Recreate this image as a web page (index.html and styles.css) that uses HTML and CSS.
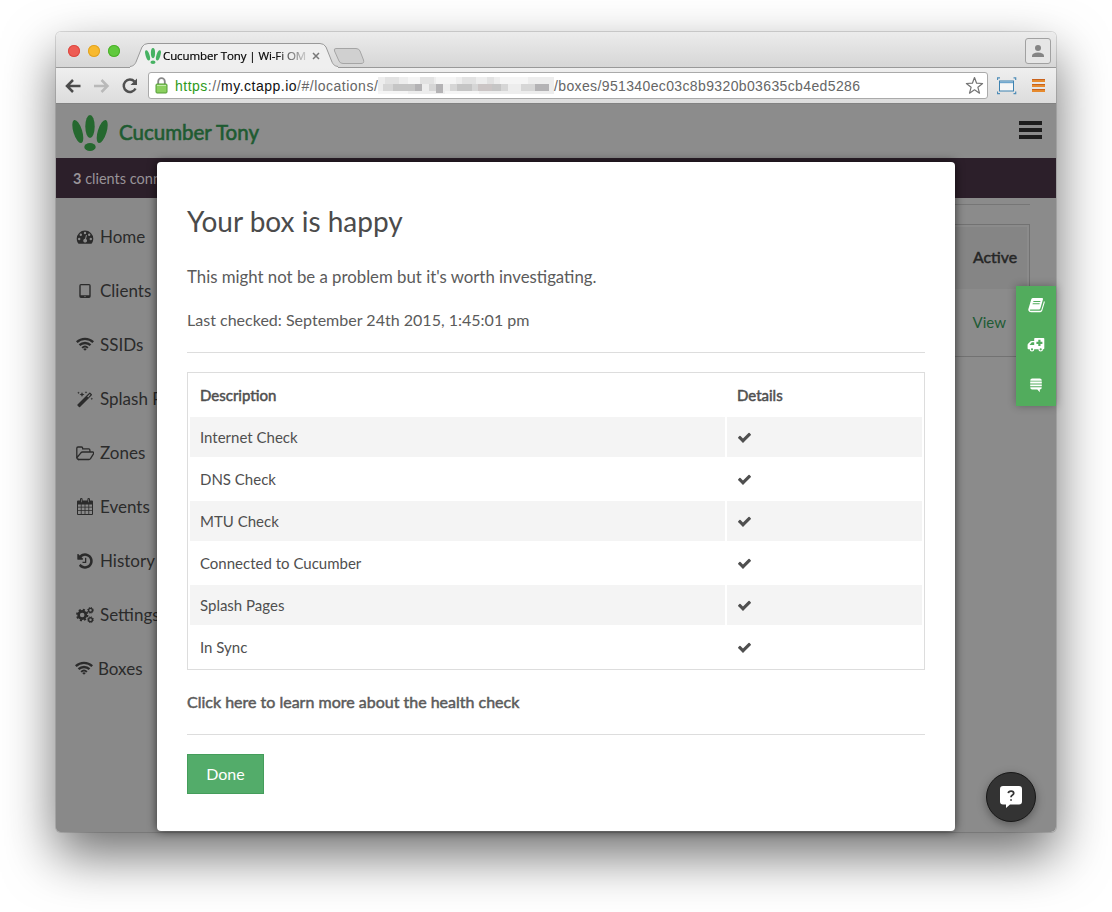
FILE: index.html
```
<!DOCTYPE html>
<html lang="en">
<head>
<meta charset="utf-8">
<title>Cucumber Tony | Wi-Fi</title>
<link rel="stylesheet" href="styles.css">
</head>
<body>
<svg width="0" height="0" class="defs">
  <defs>
    <symbol id="check" viewBox="0 0 1792 1792"><path d="M1671 566q0 40-28 68l-724 724-136 136q-28 28-68 28t-68-28l-136-136-362-362q-28-28-28-68t28-68l136-136q28-28 68-28t68 28l294 295 656-657q28-28 68-28t68 28l136 136q28 28 28 68z"/></symbol>
    <symbol id="logo" viewBox="0 0 36 36">
      <ellipse cx="18" cy="11.500" rx="4.700" ry="11.500"/>
      <ellipse cx="5.800" cy="16.500" rx="4.400" ry="12" transform="rotate(-17 5.800 16.500)"/>
      <ellipse cx="30.200" cy="16.500" rx="4.400" ry="12" transform="rotate(17 30.200 16.500)"/>
      <ellipse cx="18" cy="32" rx="5.700" ry="4"/>
    </symbol>
    <symbol id="wifi" viewBox="0 0 18 14">
      <g fill="none" stroke="currentColor" stroke-width="2.300"><path d="M.8 5.200a11.800 11.800 0 0 1 16.400 0"/><path d="M3.500 8.200a8 8 0 0 1 11 0"/><path d="M6.100 10.900a4.300 4.300 0 0 1 5.800 0" stroke-width="1.900"/></g><path d="M7.200 12a2.600 2.600 0 0 1 3.600 0L9 13.800z"/>
    </symbol>
  </defs>
</svg>
<div class="window">
  <div class="tabstrip">
    <div class="lights"><i class="red"></i><i class="yellow"></i><i class="green"></i></div>
    <div class="tab">
      <svg class="tab-shape" width="240" height="26" viewBox="0 0 240 26"><path d="M0 25 C4 24 5 22 6 20 L12 5 Q14 1.500 18 1.500 H190 Q194 1.500 196 5 L202 20 C203 22 204 24 208 25 V26 H0z" fill="#efefef"/><path d="M0 24.500 C4 24 5 22 6 20 L12 5 Q14 1.500 18 1.500 H190 Q194 1.500 196 5 L202 20 C203 22 204 24 208 24.500" fill="none" stroke="#999"/><path d="M206 6.500H226Q229 6.500 230 9L233.500 18Q234.500 21.500 231 21.500H213Q210 21.500 209 19L204.500 9Q203.500 6.500 206 6.500z" fill="#d0d0d0" stroke="#a5a5a5"/></svg>
      <svg class="favicon" width="16" height="16"><use href="#logo"/></svg>
      <span class="tab-title">Cucumber Tony | Wi-Fi OM</span>
      <svg class="tab-close" width="8" height="8" viewBox="0 0 8 8"><path d="M1 1l6 6M7 1L1 7" stroke="#777" stroke-width="1.500"/></svg>
    </div>
    <div class="profile"><svg width="14" height="14" viewBox="0 0 14 14"><circle cx="7" cy="4" r="3" fill="#858585"/><path d="M1 13v-1.500Q1.500 8.800 7 8.500q5.500.3 6 3V13z" fill="#858585"/></svg></div>
  </div>
  <div class="toolbar">
    <svg class="nav" width="76" height="20" viewBox="0 0 76 20"><g fill="none" stroke-width="2.500"><path d="M18.500 10H5.500M11 4L5 10l6 6" stroke="#4b4b4b"/><path d="M32 10h13M39.500 4l6 6-6 6" stroke="#b9b9b9"/><path d="M72.500 5.500A6.200 6.200 0 1 0 73.500 12.500" stroke="#505050"/></g><path d="M75 2.500V9H68.500z" fill="#505050"/></svg>
    <div class="address">
      <svg width="13" height="17" viewBox="0 0 13 17"><path d="M3.200 8V4.500a3.300 3.300 0 0 1 6.600 0V8" fill="none" stroke="#888" stroke-width="1.800"/><rect x="1" y="7" width="11" height="9" rx="1" fill="#8bd05f" stroke="#539c36"/><path d="M2 8.500h9" stroke="#c3eaab"/></svg>
      <div class="url"><span class="secure">https</span><span>://</span><span class="host">my.ctapp.io</span><span>/#/locations/</span></div>
      <svg class="mosaic" width="176" height="17" viewBox="0 0 176 17" shape-rendering="crispEdges">
        <path fill="#ededed" d="M0 0h176v17H0z"/><path fill="#e2e2e2" d="M7 0h14v7H7zM42 0h14v7H42zM84 0h14v7H84zM109 0h7v7h-7z"/><path fill="#f5f5f5" d="M30 0h12v7H30zM58 0h20v7H58zM122 0h28v7h-28zM0 14h30v3H0zM67 14h34v3H67z"/>
        <path fill="#d6d6d6" d="M5 7h10v7H5zM51 7h7v7h-7zM72 7h58v7H72zM143 7h14v7h-14z"/><path fill="#c5c5c5" d="M15 7h22v7H15zM79 7h15v7H79zM101 7h22v7h-22z"/><path fill="#b4b3b5" d="M37 7h7v7h-7zM58 7h7v9h-7zM157 7h14v7h-14z"/><path fill="#cbc5c5" d="M100 7h14v7h-14z"/>
      </svg>
      <div class="url path">/boxes/951340ec03c8b9320b03635cb4ed5286</div>
      <svg class="star" width="19" height="19" viewBox="0 0 19 19"><path d="M9.500 1.500l2.100 5.700 6 .3-4.700 3.800 1.600 5.900-5-3.400-5 3.400 1.600-5.900L1.400 7.500l6-.3z" fill="#fff" stroke="#747474" stroke-width="1.200" stroke-linejoin="round"/></svg>
    </div>
    <svg width="20" height="18" viewBox="0 0 20 18"><rect x="2.500" y="4" width="14" height="10" fill="#f6f6f6" stroke="#3d82b0"/><path d="M3 4.500h13v1.700H3z" fill="#6fa6cd"/><path d="M.5 3V.8H3M16.500.8h2.200V3M.5 14.500v2.200H3M16.500 16.700h2.200v-2.200" fill="none" stroke="#4f8db8" stroke-width="1.200"/></svg>
    <svg class="menu" width="13" height="14" viewBox="0 0 13 14"><path d="M0 0h13v3H0zM0 5h13v3H0zM0 10h13v3H0z" fill="#e68a2e"/><path d="M0 .5h13M0 5.500h13M0 10.500h13" stroke="#c9631c"/></svg>
  </div>

  <div class="page">
    <header class="brand">
      <svg class="logo" width="36" height="36"><use href="#logo"/></svg>
      <span class="brand-name">Cucumber Tony</span>
      <div class="burger"><i></i><i></i><i></i></div>
    </header>
    <div class="status"><b>3</b>&nbsp;clients connected</div>
    <div class="body">
      <nav class="sidebar">
        <a><svg viewBox="0 0 18 18"><path fill-rule="evenodd" d="M9 2.500a8.300 8.300 0 0 0-8.300 8.300q0 2.500 1.300 4.500.3.400.8.400h12.400q.5 0 .8-.4 1.300-2 1.300-4.500A8.300 8.300 0 0 0 9 2.500zM9 3.800a1.200 1.200 0 1 1 0 2.400 1.200 1.200 0 0 1 0-2.400zM4.800 5.600a1.200 1.200 0 1 1 0 2.400 1.200 1.200 0 0 1 0-2.400zM13.200 5.600a1.200 1.200 0 1 1 0 2.400 1.200 1.200 0 0 1 0-2.400zM3.200 9.800a1.200 1.200 0 1 1 0 2.400 1.200 1.200 0 0 1 0-2.400zM14.800 9.800a1.200 1.200 0 1 1 0 2.400 1.200 1.200 0 0 1 0-2.400zM10 7l1 .3-1 3.700a1.900 1.900 0 1 1-1-.2z"/></svg>Home</a>
        <a><svg viewBox="0 0 18 18"><path fill-rule="evenodd" d="M5 2h8a1.700 1.700 0 0 1 1.700 1.700v10.600A1.700 1.700 0 0 1 13 16H5a1.700 1.700 0 0 1-1.700-1.700V3.700A1.700 1.700 0 0 1 5 2zM4.700 3.300v9.900h8.600V3.300zM9 14a.6.6 0 1 0 0 1.200A.6.600 0 0 0 9 14z"/></svg>Clients</a>
        <a><svg viewBox="0 0 18 16"><use href="#wifi" width="18" height="14"/></svg>SSIDs</a>
        <a><svg viewBox="0 0 18 18"><path fill-rule="evenodd" d="M1.500 14.500L13.300 2.700q.5-.5 1 0l1.500 1.500q.5.500 0 1L4 17q-.5.500-1 0l-1.500-1.500q-.5-.5 0-1zM11.200 6.400l1 1 2.300-2.700-.7-.7z"/><path d="M6 2l.7 1.800L8.500 4.500 6.700 5.200 6 7l-.7-1.800-1.800-.7 1.800-.7zM2.500 1.500l.4.900.9.400-.9.400-.4.900-.4-.9-.9-.4.900-.4zM10 1l.4.900.9.400-.9.400-.4.900-.4-.9-.9-.4.900-.4zM15.800 7.500l.4.900.9.400-.9.400-.4.900-.4-.9-.9-.4.900-.4z"/></svg>Splash Pages</a>
        <a><svg viewBox="0 0 18 18"><path d="M.8 13.700V4.200Q.8 3 2 3h3.500Q6.700 3 6.700 4.200v.6h6q1.200 0 1.200 1.200v1.800M2 15.500h11q.9 0 1.500-.8l3-4.800Q18 8 16.700 8H6.500q-.9 0-1.600.8L1 13.500" fill="none" stroke="currentColor" stroke-width="1.300"/><path d="M.8 13q0 2.500 2.200 2.500" fill="none" stroke="currentColor" stroke-width="1.300"/></svg>Zones</a>
        <a><svg viewBox="0 0 18 18"><path fill-rule="evenodd" d="M2 2.500h2V1.300a1.300 1.300 0 0 1 2.600 0v1.200h4.800V1.300a1.300 1.300 0 0 1 2.600 0v1.200h2q1 0 1 1V16q0 1-1 1H2q-1 0-1-1V3.500q0-1 1-1zM2 6.500v2.300h2.800V6.500zM5.600 6.500v2.300h3V6.500zM9.400 6.500v2.300h3V6.500zM13.200 6.500v2.300H16V6.500zM2 9.600v2.600h2.800V9.600zM5.600 9.600v2.600h3V9.600zM9.400 9.600v2.600h3V9.600zM13.200 9.600v2.600H16V9.600zM2 13v3h2.800v-3zM5.600 13v3h3v-3zM9.400 13v3h3v-3zM13.200 13v3H16v-3zM5 1.300V4.300h.6v-3zM12.400 1.300V4.300h.6v-3z"/></svg>Events</a>
        <a><svg viewBox="0 0 1792 1792"><path d="M1664 896q0 156-61 298t-164 245-245 164-298 61q-172 0-327-72.500t-264-204.500q-7-10-6.500-22.500t8.500-20.500l137-138q10-9 25-9 16 2 23 12 73 95 179 147t225 52q104 0 198.500-40.500t163.500-109.500 109.500-163.500 40.500-198.500-40.500-198.500-109.500-163.500-163.500-109.500-198.500-40.500q-98 0-188 35.500t-160 101.500l137 138q31 30 14 69-17 40-59 40h-448q-26 0-45-19t-19-45v-448q0-42 40-59 39-17 69 14l130 129q107-101 244.500-156.500t284.500-55.500q156 0 298 61t245 164 164 245 61 298zm-640-288v448q0 14-9 23t-23 9h-320q-14 0-23-9t-9-23v-64q0-14 9-23t23-9h224v-352q0-14 9-23t23-9h64q14 0 23 9t9 23z"/></svg>History</a>
        <a><svg viewBox="0 0 18 18"><g fill="none" stroke="currentColor"><circle cx="6.200" cy="9" r="3.600" stroke-width="2.600"/><circle cx="6.200" cy="9" r="5.300" stroke-width="1.800" stroke-dasharray="2.080 2.080"/><circle cx="14.500" cy="4.300" r="1.900" stroke-width="1.400"/><circle cx="14.500" cy="4.300" r="2.900" stroke-width="1" stroke-dasharray="1.140 1.140"/><circle cx="14.500" cy="13.700" r="1.900" stroke-width="1.400"/><circle cx="14.500" cy="13.700" r="2.900" stroke-width="1" stroke-dasharray="1.140 1.140"/></g></svg>Settings</a>
        <a class="tight"><svg viewBox="0 0 18 16"><use href="#wifi" width="18" height="14"/></svg>Boxes</a>
      </nav>
      <main class="content">
        <hr>
        <div class="list">
          <div class="list-head">Active</div>
          <div class="list-row">View</div>
        </div>
      </main>
    </div>
  </div>

  <section class="modal">
    <h1>Your box is happy</h1>
    <p class="note">This might not be a problem but it's worth investigating.</p>
    <p class="checked">Last checked: September 24th 2015, 1:45:01 pm</p>
    <table>
      <thead><tr><th>Description</th><th class="details">Details</th></tr></thead>
      <tbody>
        <tr><td>Internet Check</td><td><svg><use href="#check"/></svg></td></tr>
        <tr><td>DNS Check</td><td><svg><use href="#check"/></svg></td></tr>
        <tr><td>MTU Check</td><td><svg><use href="#check"/></svg></td></tr>
        <tr><td>Connected to Cucumber</td><td><svg><use href="#check"/></svg></td></tr>
        <tr><td>Splash Pages</td><td><svg><use href="#check"/></svg></td></tr>
        <tr><td>In Sync</td><td><svg><use href="#check"/></svg></td></tr>
      </tbody>
    </table>
    <p class="learn">Click here to learn more about the health check</p>
    <button>Done</button>
  </section>

  <aside class="dock">
    <svg width="18" height="16" viewBox="0 0 18 16"><path fill="#fff" fill-rule="evenodd" d="M6 1h9q1.300 0 1 1.200l-2.600 9Q13 12.500 12 12.500H3.500q-1 0-.7.700.3.600 1.200.600h9.300q.7 0 1-.7L17 4q1 .6.700 1.600l-2.500 8.200q-.5 1.400-1.900 1.400H4q-2 0-2.600-1.700-.3-.8 0-1.600L4.300 2.300Q4.700 1 6 1zM6.500 4l-.3 1h7l.3-1zM5.800 6.300l-.3 1h7l.3-1z"/></svg>
    <svg width="18" height="16" viewBox="0 0 18 16"><path fill="#fff" fill-rule="evenodd" d="M8 1h8.500q.8 0 .8.800v9.500q0 .9-1 .9H16a2.300 2.300 0 0 1-4.600 0H7.300a2.300 2.300 0 0 1-4.600 0H1.500q-.9 0-.9-.9V8q0-.7.500-1.200L3.600 4.300Q4 4 4.700 4h2.500V1.800Q7.200 1 8 1zM2.500 8h4.700V5.200H4.800zM11.300 2.700v2H9.400v2.200h1.900v2h2.200v-2h1.900V4.700h-1.900v-2zM5 11.200a1.100 1.100 0 1 0 0 2.200 1.100 1.100 0 0 0 0-2.200zM13.700 11.200a1.100 1.100 0 1 0 0 2.200 1.100 1.100 0 0 0 0-2.200z"/></svg>
    <svg width="18" height="16" viewBox="0 0 18 16"><path fill="#fff" d="M3.200 3.700Q3.200 1.500 5.200 1.500h7.600q2 0 2 2.200zM3.200 4.600h11.600v1.900H3.200zM3.200 7.400h11.600v1.900H3.200zM3.200 10.200h11.600q0 2.400-2 2.400v2.600l-2.500-2.600H5.200q-2 0-2-2.400z"/></svg>
  </aside>
  <div class="chat">
    <svg width="22" height="23" viewBox="0 0 22 23"><path d="M3 0h16q3 0 3 3v12.500q0 3-3 3H10L6 22v-3.500H3q-3 0-3-3V3q0-3 3-3z" fill="#fff"/><path d="M8.300 7.200q.3-2.100 2.800-2.100 2.600 0 2.600 2.100 0 1.200-1.500 2-1.200.7-1.200 2.100" fill="none" stroke="#333" stroke-width="1.800"/><path d="M10.200 13.200h1.700v1.600h-1.700z" fill="#333"/></svg>
  </div>
</div>
</body>
</html>
```
FILE: styles.css
```
* { box-sizing: border-box; }
body { margin: 0; width: 1112px; height: 912px; padding: 32px 56px; background: #fff; overflow: hidden; font-family: Lato, "Open Sans", sans-serif; }
svg { flex: none; fill: currentColor; }
.defs { position: absolute; }
.window { position: relative; width: 1000px; height: 800px; display: flex; flex-direction: column; border-radius: 5px; box-shadow: 0 0 0 1px rgba(0,0,0,.13), 0 23px 52px rgba(0,0,0,.57); }

.tabstrip { height: 36px; display: flex; align-items: flex-start; border-radius: 5px 5px 0 0; border-bottom: 1px solid #999; background: linear-gradient(#ececec, #d6d6d6); }
.lights { display: flex; gap: 8px; padding: 13px 0 0 12px; width: 74px; }
.lights i { width: 12px; height: 12px; border-radius: 50%; flex: none; }
.red { background: #ee5c54; box-shadow: inset 0 0 0 1px #dc4a42; }
.yellow { background: #f8b92e; box-shadow: inset 0 0 0 1px #e0a324; }
.green { background: #60c93d; box-shadow: inset 0 0 0 1px #4cb02c; }
.tab { position: relative; margin-top: 11px; width: 240px; height: 26px; display: flex; align-items: center; padding-left: 15px; }
.tab-shape { position: absolute; left: 0; top: -1px; }
.favicon { position: relative; color: #46b262; margin-right: 2px; }
.tab-title { position: relative; width: 143px; font: 11.500px/16px "Open Sans", sans-serif; letter-spacing: -.1px; white-space: nowrap; color: transparent; background: linear-gradient(90deg, #000 78%, rgba(0,0,0,.15) 100%); background-clip: text; -webkit-background-clip: text; -webkit-text-stroke: .2px transparent; }
.tab-close { position: relative; margin-left: 6px; }
.profile { margin: 6px 5px 0 auto; width: 26px; height: 26px; border: 1px solid #a1a1a1; border-radius: 3px; display: grid; place-items: center; background: #e6e6e6; }

.toolbar { height: 36px; display: flex; align-items: center; padding: 0 11px 0 6px; background: linear-gradient(#efefef, #dcdcdc); border-bottom: 1px solid #828282; }
.nav { margin-right: 10px; }
.address { width: 840px; height: 27px; display: flex; align-items: center; padding-left: 6px; border: 1px solid #aaa; border-radius: 3px; background: #fff; margin-right: 9px; }
.url { margin-left: 7px; width: 202px; font: 14px/20px "Liberation Sans", Arial, sans-serif; color: #666; white-space: nowrap; letter-spacing: .5px; }
.secure { color: #2d9a1a; }
.host { color: #111; }
.mosaic { margin-left: 1px; }
.url.path { margin-left: 0; width: 312px; letter-spacing: .37px; }
.star { margin-left: auto; margin-right: 3px; }
.menu { margin-left: auto; }

.page { flex: 1; display: flex; flex-direction: column; background: #8b8b8b; border-radius: 0 0 5px 5px; overflow: hidden; }
.brand { height: 54px; flex: none; display: flex; align-items: center; padding: 4px 14px 0 16px; background: #8c8c8c; }
.logo { color: #25682f; }
.brand-name { margin-left: 11px; padding-bottom: 2px; font-size: 20.500px; color: #1e5b31; -webkit-text-stroke: .6px; }
.burger { margin: -6px 0 0 auto; width: 23px; display: grid; gap: 3px; }
.burger i { height: 4px; background: #1d1d1d; }
.status { height: 40px; flex: none; padding-left: 17px; background: #2c1f2a; color: #989398; font-size: 14.500px; line-height: 41px; }
.status b { font-weight: 700; }
.body { flex: 1; display: flex; }
.sidebar { width: 130px; padding: 11px 0 0 20px; background: #898989; color: #2b2b2b; }
.sidebar a { height: 54px; display: flex; align-items: center; gap: 6px; font-size: 17px; white-space: nowrap; }
.sidebar svg { width: 18px; height: 18px; margin-top: 1px; }
.sidebar .tight { gap: 5px; margin-left: -1px; }
.content { flex: 1; padding: 6px 26px 0 0; }
.content hr { height: 1px; border: 0; margin: 0 0 19px; background: #767676; }
.list { height: 133px; border: 1px solid #727272; padding: 2px; font-size: 15px; }
.list-head { height: 62px; line-height: 60px; padding: 0 10px; font-size: 15.800px; text-align: right; background: #858585; color: #262626; -webkit-text-stroke: .5px; }
.list-row { line-height: 66px; padding-right: 21px; text-align: right; color: #1e5b34; }

.modal { position: absolute; left: 101px; top: 130px; width: 798px; height: 669px; padding: 39px 30px; background: #fff; border-radius: 4px; box-shadow: 0 0 10px rgba(0,0,0,.65); color: #5b5b5b; font-size: 16px; }
.modal h1 { margin: 0; font-size: 28px; line-height: 40px; font-weight: 400; color: #4b4b4b; }
.modal p { margin: 0; line-height: 26px; }
.modal .note { margin-top: 23px; font-size: 16.800px; }
.modal .checked { margin-top: 17px; padding-bottom: 19px; border-bottom: 1px solid #ddd; line-height: 26px; font-size: 16.050px; }
.modal table { width: 738px; margin-top: 19px; border: 1px solid #ddd; border-collapse: separate; border-spacing: 2px; table-layout: fixed; font-size: 15px; color: #4f4f4f; }
.modal th, .modal td { height: 40px; padding: 0 10px; text-align: left; font-weight: 400; }
.modal th { -webkit-text-stroke: .5px; }
.modal .details { width: 195px; }
.modal tbody tr:nth-child(odd) td { background: #f4f4f4; }
.modal td svg { display: block; width: 15px; height: 15px; }
.modal .learn { margin-top: 19px; padding-bottom: 19px; border-bottom: 1px solid #ddd; -webkit-text-stroke: .5px; }
.modal button { display: block; margin-top: 19px; width: 77px; height: 40px; padding: 0 0 2px; border: 1px solid #449d5b; background: #53ac6a; color: #fff; font: 16px Lato, sans-serif; }

.dock { position: absolute; left: 960px; top: 254px; width: 40px; height: 120px; display: grid; place-items: center; background: #52ac5d; box-shadow: 0 0 8px rgba(0,0,0,.3); }
.dock svg { margin-top: -2px; }
.chat { position: absolute; left: 930px; top: 740px; width: 50px; height: 50px; border-radius: 50%; display: grid; place-items: center; background: #333; border: 1px solid #171717; box-shadow: 0 3px 10px rgba(0,0,0,.35); }
```
